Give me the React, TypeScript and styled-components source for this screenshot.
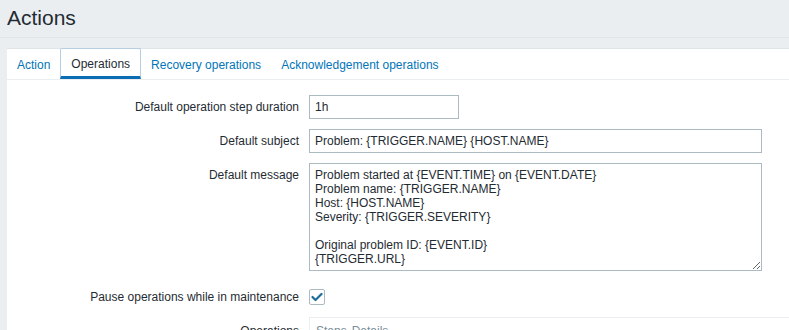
import React from "react";
import styled, { createGlobalStyle } from "styled-components";

const Global = createGlobalStyle`
  html, body { margin: 0; padding: 0; }
  body {
    background: #ebeef0;
    font-family: "Liberation Sans", Arial, sans-serif;
    font-size: 12px;
    color: #1f2c33;
    overflow: hidden;
  }
`;

const Header = styled.header`
  height: 37px;
  border-bottom: 1px solid #e0e5e8;
  padding: 0 7px;
  display: flex;
  align-items: center;
`;

const Title = styled.h1`
  margin: 0;
  font-size: 21px;
  font-weight: normal;
  color: #1f2c33;
  line-height: 24px;
  margin-top: -1px;
`;

const Panel = styled.section`
  margin: 10px 0 0 7px;
  background: #ffffff;
  border-top: 1px solid #dfe4e7;
  min-height: 400px;
`;

const TabBar = styled.nav`
  display: flex;
  height: 31px;
  border-bottom: 1px solid #ebeef0;
  margin-top: -1px;
`;

const Tab = styled.a<{ $active?: boolean }>`
  display: flex;
  align-items: center;
  padding: 2px 10px 0;
  height: 31px;
  box-sizing: border-box;
  border: ${(p) => (p.$active ? "1px solid #b6cde3" : "none")};
  border-bottom: ${(p) => (p.$active ? "3px solid #0b6db3" : "none")};
  border-radius: 2px 2px 0 0;
  color: ${(p) => (p.$active ? "#1f2c33" : "#0275b8")};
  text-decoration: none;
  cursor: pointer;
`;

const Form = styled.div`
  display: grid;
  grid-template-columns: 292px 1fr;
  column-gap: 10px;
  row-gap: 10px;
  padding-top: 15px;
  align-items: start;
`;

const Label = styled.label`
  text-align: right;
  line-height: 24px;
  white-space: nowrap;
`;

const Input = styled.input<{ $w: number }>`
  box-sizing: border-box;
  width: ${(p) => p.$w}px;
  height: 24px;
  border: 1px solid #acbbc2;
  padding: 0 5px;
  font: inherit;
  color: #1f2c33;
  background: #fff;
  outline: none;
  margin: 0;
  display: block;
`;

const TextArea = styled.textarea`
  box-sizing: border-box;
  width: 453px;
  height: 108px;
  border: 1px solid #acbbc2;
  padding: 4px 5px;
  font: inherit;
  line-height: 14px;
  color: #1f2c33;
  background: #fff;
  outline: none;
  margin: 0;
  display: block;
  overflow: hidden;
`;

const CheckLabel = styled(Label)`
  padding-top: 4px;
`;

const CheckCell = styled.div`
  height: 28px;
  padding-top: 4px;
  box-sizing: border-box;
  display: flex;
  align-items: center;
`;

const CheckBox = styled.span`
  width: 16px;
  height: 16px;
  box-sizing: border-box;
  border: 1px solid #acbbc2;
  border-radius: 2px;
  background: #fff;
  display: flex;
  align-items: center;
  justify-content: center;
`;

const OpsBox = styled.div`
  border: 1px solid #ebeef0;
  border-right: none;
  height: 60px;
  width: 600px;
  padding: 6px 6px;
  box-sizing: border-box;
  margin-top: -2px;
`;

const OpsHead = styled.div`
  color: #768d99;
  line-height: 14px;
  display: flex;
  gap: 5px;
`;

const message = `Problem started at {EVENT.TIME} on {EVENT.DATE}
Problem name: {TRIGGER.NAME}
Host: {HOST.NAME}
Severity: {TRIGGER.SEVERITY}

Original problem ID: {EVENT.ID}
{TRIGGER.URL}`;

export default function App() {
  return (
    <>
      <Global />
      <Header>
        <Title>Actions</Title>
      </Header>
      <Panel>
        <TabBar>
          <Tab>Action</Tab>
          <Tab $active>Operations</Tab>
          <Tab>Recovery operations</Tab>
          <Tab>Acknowledgement operations</Tab>
        </TabBar>
        <Form>
          <Label>Default operation step duration</Label>
          <Input $w={150} defaultValue="1h" />
          <Label>Default subject</Label>
          <Input $w={453} defaultValue="Problem: {TRIGGER.NAME} {HOST.NAME}" />
          <Label>Default message</Label>
          <TextArea defaultValue={message} spellCheck={false} />
          <CheckLabel>Pause operations while in maintenance</CheckLabel>
          <CheckCell>
            <CheckBox>
              <svg width="12" height="10" viewBox="0 0 12 10">
                <path d="M1.5 5 L4.5 8 L10.5 2" fill="none" stroke="#1a6e9c" strokeWidth="2.2" strokeLinecap="round" strokeLinejoin="round" />
              </svg>
            </CheckBox>
          </CheckCell>
          <Label>Operations</Label>
          <OpsBox>
            <OpsHead>
              <span>Steps</span>
              <span>Details</span>
            </OpsHead>
          </OpsBox>
        </Form>
      </Panel>
    </>
  );
}
